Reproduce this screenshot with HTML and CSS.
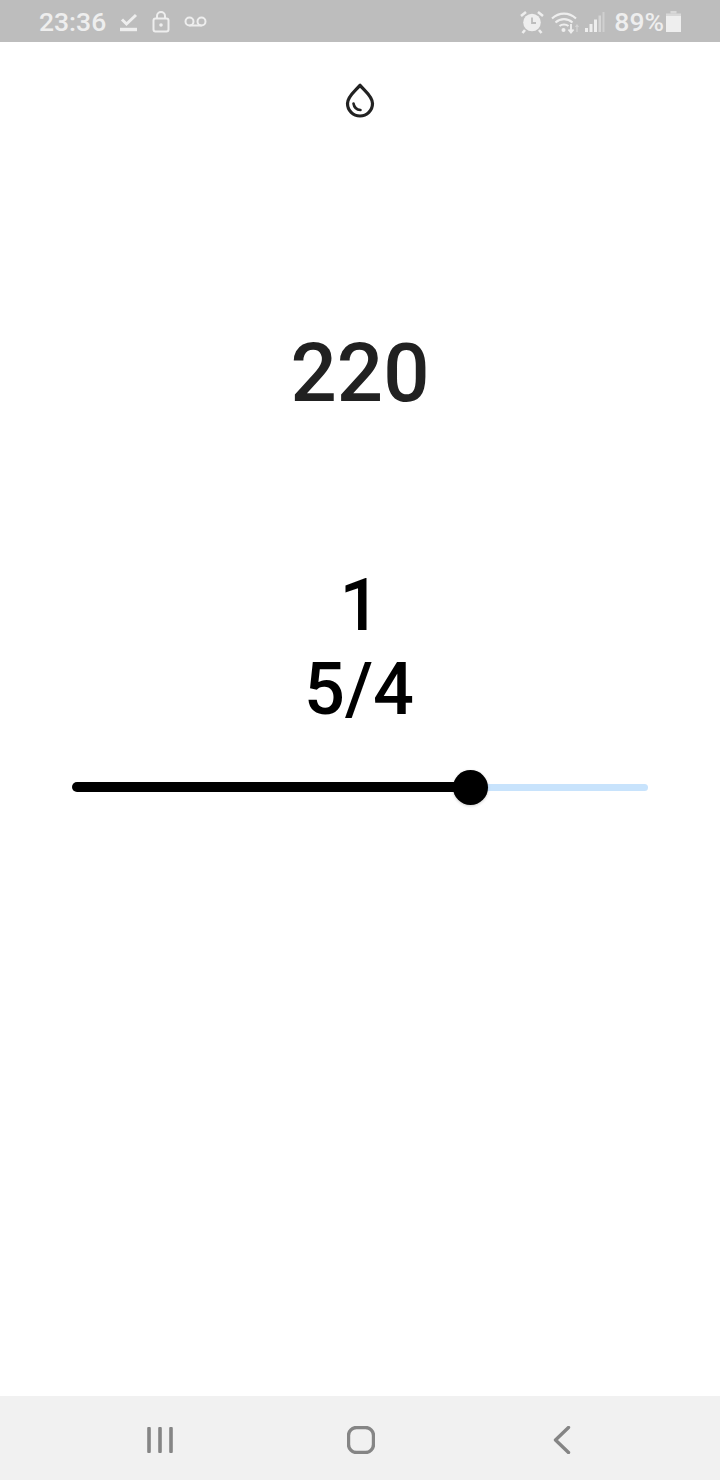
FILE: index.html
```html
<!DOCTYPE html>
<html lang="en">
<head>
    <meta charset="UTF-8">
    <meta name="viewport" content="width=device-width, initial-scale=1.0">
    <title>Metronome</title>
    <link rel="stylesheet" href="styles.css">
</head>
<body>
    <div class="status-bar">
        <div class="status-left">
            <span class="clock">23:36</span>
            <svg class="check-icon" width="18" height="20" viewBox="0 0 18 20"><path d="M2 7.500l4.500 4.500L16 3" fill="none" stroke="#eee" stroke-width="3"/><path d="M0 17.500h17" stroke="#eee" stroke-width="3.400"/></svg>
            <svg class="lock-icon" width="18" height="22" viewBox="0 0 18 22"><rect x="1.500" y="7.500" width="15" height="13" rx="2" fill="none" stroke="#eee" stroke-width="2"/><path d="M5 7.500V5a4 4 0 0 1 8 0v2.500" fill="none" stroke="#eee" stroke-width="2"/><circle cx="9" cy="14" r="1.800" fill="#eee"/></svg>
            <svg class="mail-icon" width="23" height="11" viewBox="0 0 23 11"><circle cx="5.500" cy="5.500" r="4" fill="none" stroke="#eee" stroke-width="2"/><circle cx="17.500" cy="5.500" r="4" fill="none" stroke="#eee" stroke-width="2"/><path d="M5.500 9.500h12" stroke="#eee" stroke-width="2"/></svg>
        </div>
        <div class="status-right">
            <svg width="24" height="24" viewBox="0 0 24 24"><circle cx="12" cy="12.500" r="8.800" fill="#eee"/><path d="M12 7.500v5.500h4" fill="none" stroke="#bdbdbd" stroke-width="1.800"/><path d="M1 6l5-4M23 6l-5-4M5 20l-2.500 3M19 20l2.500 3" stroke="#eee" stroke-width="2.600"/></svg>
            <svg class="wifi-icon" width="30" height="24" viewBox="0 0 30 24"><path d="M1 8.500c7-6.500 17-6.500 24 0M4.500 12.500c5-4.500 12-4.500 17 0M8.500 16c2.500-2 6.500-2 9 0" fill="none" stroke="#eee" stroke-width="2.100"/><circle cx="12.500" cy="20" r="2" fill="#eee"/><path d="M20 14v8M17.500 19.500l2.500 3 2.500-3" fill="none" stroke="#eee" stroke-width="1.900"/><path d="M26 22v-7M24.500 17l1.500-2 1.500 2" fill="none" stroke="#d4d4d4" stroke-width="1.200"/></svg>
            <svg class="signal-icon" width="20" height="22" viewBox="0 0 20 22"><rect x="0" y="17" width="3" height="4" fill="#eee"/><rect x="4.500" y="13" width="3" height="8" fill="#eee"/><rect x="9" y="8.500" width="3" height="12.500" fill="#eee"/><rect x="13.500" y="4.500" width="2.500" height="16.500" fill="#d6d6d6"/><rect x="17.500" y="1" width="2" height="20" fill="#d0d0d0"/></svg>
            <span class="battery-text">89%</span>
            <svg class="battery-icon" width="15" height="21" viewBox="0 0 15 21"><path d="M4.500 0h6v2.500h-6z" fill="#d8d8d8"/><path d="M0 2.500h15V6H0z" fill="#d8d8d8"/><path d="M0 5h15v16H0z" fill="#eee"/></svg>
        </div>
    </div>

    <main class="content">
        <svg class="drop-icon" width="30" height="36" viewBox="0 0 30 36"><path d="M15 3.200C11 8.500 2.500 14 2.500 21.500a12.500 12.500 0 0 0 25 0C27.500 14 19 8.500 15 3.200z" fill="none" stroke="#222" stroke-width="3.200" stroke-linejoin="round"/><path d="M8.500 21.500c.5 3.500 3 6.200 7 6.500" fill="none" stroke="#222" stroke-width="2.600" stroke-linecap="round"/></svg>
        <div class="tempo">220</div>
        <div class="beat">1</div>
        <div class="signature">5/4</div>
        <div class="slider">
            <div class="slider-fill" style="width: 399px"></div>
            <div class="slider-thumb"></div>
            <div class="slider-rest"></div>
        </div>
    </main>

    <div class="nav-bar">
        <svg class="nav-recent" width="28" height="26" viewBox="0 0 28 26"><path d="M3 1.500v23M14 1.500v23M25 1.500v23" stroke="#858585" stroke-width="3.600" stroke-linecap="round"/></svg>
        <svg class="nav-home" width="28" height="28" viewBox="0 0 28 28"><rect x="1.500" y="1.500" width="25" height="25" rx="8" fill="none" stroke="#858585" stroke-width="3.400"/></svg>
        <svg class="nav-back" width="18" height="28" viewBox="0 0 18 28"><path d="M15.500 1.500L2.500 14l13 12.500" fill="none" stroke="#858585" stroke-width="3.400" stroke-linecap="round" stroke-linejoin="round"/></svg>
    </div>
</body>
</html>
```

FILE: styles.css
```css
* {
    box-sizing: border-box;
}
body {
    margin: 0;
    width: 720px;
    height: 1480px;
    display: flex;
    flex-direction: column;
    background-color: #fff;
    font-family: Roboto, "Liberation Sans", sans-serif;
}
svg {
    display: block;
    flex: none;
}

.status-bar {
    height: 42px;
    padding: 1px 39px 0 39px;
    display: flex;
    justify-content: space-between;
    align-items: center;
    background-color: #bdbdbd;
    color: #eee;
    font-size: 26.5px;
    font-weight: 500;
}
.status-left, .status-right {
    display: flex;
    align-items: center;
}
.check-icon {
    margin-left: 14px;
}
.lock-icon {
    margin-left: 14px;
}
.mail-icon {
    margin-left: 14px;
}
.wifi-icon {
    margin-left: 7px;
}
.signal-icon {
    margin-left: 4px;
}
.battery-text {
    margin-left: 9px;
}
.battery-icon {
    margin-left: 2px;
}

.content {
    flex: 1;
    display: flex;
    flex-direction: column;
    align-items: center;
    padding-top: 40px;
}
.tempo {
    margin-top: 208px;
    font-size: 81.5px;
    line-height: 94px;
    font-weight: 500;
    color: #212121;
}
.beat {
    margin-top: 144px;
    font-size: 72px;
    line-height: 84px;
    font-weight: 500;
    color: #000;
}
.signature {
    padding-right: 2px;
    font-size: 72px;
    line-height: 84px;
    font-weight: 500;
    color: #000;
}
.slider {
    margin-top: 37px;
    width: 576px;
    height: 36px;
    display: flex;
    align-items: center;
}
.slider-fill {
    height: 10px;
    background-color: #000;
    border-radius: 5px 0 0 5px;
}
.slider-thumb {
    width: 35px;
    height: 35px;
    margin: 0 -18px;
    border-radius: 50%;
    background-color: #000;
    box-shadow: 0 1px 3px rgba(0, 0, 0, 0.2);
    z-index: 1;
}
.slider-rest {
    flex: 1;
    height: 7px;
    background-color: #c8e3fc;
    border-radius: 0 4px 4px 0;
}

.nav-bar {
    height: 84px;
    padding: 4px 0 0 146px;
    display: flex;
    align-items: center;
    background-color: #f1f1f1;
}
.nav-home {
    margin-left: 173px;
}
.nav-back {
    margin-left: 178px;
}
```
